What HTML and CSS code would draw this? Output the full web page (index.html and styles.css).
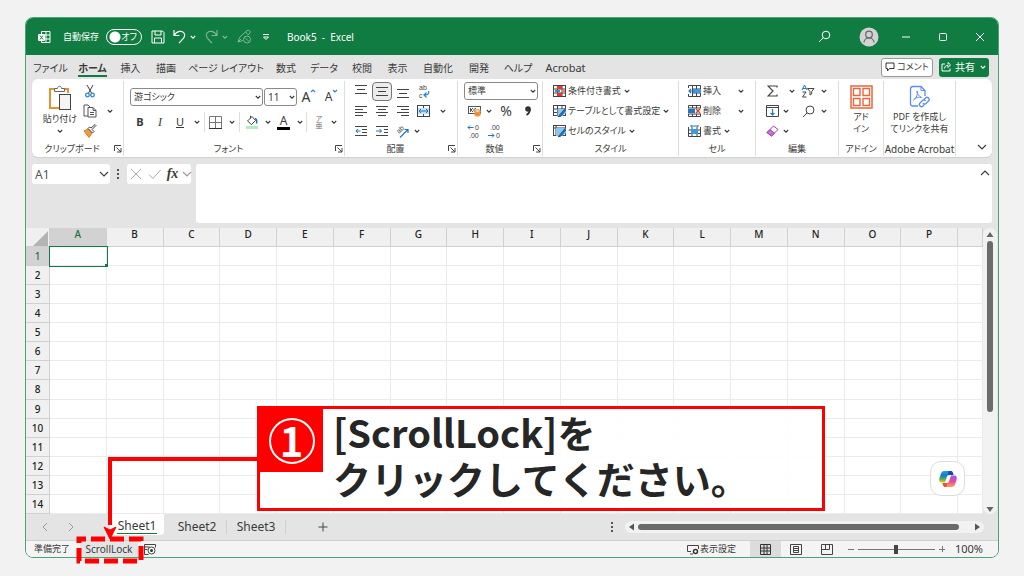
FILE: index.html
```html
<!DOCTYPE html>
<html lang="ja">
<head>
    <meta charset="utf-8">
    <title>Book5 - Excel</title>
    <link rel="stylesheet" href="styles.css">
</head>
<body>
<svg class="sprite" width="0" height="0">
    <symbol id="chev" viewBox="0 0 8 8"><path d="M1.800 3L4 5.200l2.200-2.200" fill="none" stroke="currentColor" stroke-width="1.100"/></symbol>
    <symbol id="chev-big" viewBox="0 0 12 12"><path d="M2 4l4 4 4-4" fill="none" stroke="currentColor" stroke-width="1.100"/></symbol>
    <symbol id="launch" viewBox="0 0 8 8"><path d="M.5 6V.5H7M2.500 2.500L7 7M7 3v4H3" fill="none" stroke="#444"/></symbol>
</svg>
<div class="window">
    <header class="titlebar">
        <svg class="app-logo" width="13" height="14" viewBox="0 0 13 14"><path d="M3.500 4V1.500h8.500v11H3.500v-2M8 1.500v11M3.500 5h8.500M7 9h5" fill="none" stroke="#fff"/><rect x="0" y="4" width="7" height="7" rx="1" fill="#fff"/><path d="M2 5.500l3 4M5 5.500l-3 4" stroke="#107c41"/></svg>
        <label class="autosave" for="autosave">自動保存</label>
        <span class="toggle"><input type="checkbox" id="autosave"><span>オフ</span></span>
        <div class="quick">
            <button aria-label="保存"><svg width="14" height="14" viewBox="0 0 14 14"><path d="M1 1h10.500L13 2.500V13H1zM4 1v4h6V1M3.500 13V8h7v5" fill="none" stroke="#fff"/></svg></button>
            <span class="split">
                <button aria-label="元に戻す"><svg width="15" height="15" viewBox="0 0 15 15"><path d="M2 1v5.500h5.500M2 6.500C5 1.500 10 1.500 12 4c2 3 0 5-5 10" fill="none" stroke="#fff" stroke-width="1.200"/></svg></button>
                <button aria-label="一覧"><svg width="8" height="8"><use href="#chev"/></svg></button>
            </span>
            <span class="split dim">
                <button aria-label="やり直し"><svg width="15" height="15" viewBox="0 0 15 15"><path d="M13 1v5.500H7.500M13 6.500C10 1.500 5 1.500 3 4c-2 3 0 5 5 10" fill="none" stroke="#fff" stroke-width="1.200"/></svg></button>
                <button aria-label="一覧"><svg width="8" height="8"><use href="#chev"/></svg></button>
            </span>
            <button class="dim" aria-label="ペン"><svg width="15" height="15" viewBox="0 0 15 15"><path d="M1 13l1.500-4.500L10 1.500c1.500-1 4 .5 3 2.500l-2 2M1 13l5-1.500M8.500 3l3 3M1 13l3-3" fill="none" stroke="#fff"/><circle cx="10" cy="10.500" r="3.500" fill="none" stroke="#fff"/><path d="M8 8.500l4 4" stroke="#fff"/></svg></button>
            <button aria-label="カスタマイズ"><svg width="8" height="8" viewBox="0 0 8 8"><path d="M1 1.500h6M1.500 4L4 6.500 6.500 4z" fill="none" stroke="#fff"/></svg></button>
        </div>
        <span class="doc-title">Book5&nbsp; -&nbsp; Excel</span>
        <div class="win-buttons">
            <button aria-label="検索"><svg width="13" height="13" viewBox="0 0 13 13"><circle cx="8" cy="5" r="3.800" fill="none" stroke="#fff"/><path d="M5.200 7.800L1 12" stroke="#fff"/></svg></button>
            <button aria-label="アカウント"><svg width="20" height="20" viewBox="0 0 20 20"><circle cx="10" cy="10" r="9.500" fill="#d3d3d3"/><circle cx="10" cy="7.500" r="3.300" fill="none" stroke="#666" stroke-width="1.200"/><path d="M5 15.500c0-6 10-6 10 0" fill="none" stroke="#666" stroke-width="1.200"/></svg></button>
            <button aria-label="最小化"><svg width="10" height="10"><path d="M1 5h8" stroke="#fff"/></svg></button>
            <button aria-label="最大化"><svg width="10" height="10"><rect x="1.500" y="1.500" width="7" height="7" rx="1" fill="none" stroke="#fff"/></svg></button>
            <button aria-label="閉じる"><svg width="10" height="10"><path d="M1 1l8 8M9 1L1 9" stroke="#fff"/></svg></button>
        </div>
    </header>

    <nav class="tabs">
        <div class="tab-list">
            <a href="#">ファイル</a>
            <a href="#" class="current">ホーム</a>
            <a href="#">挿入</a>
            <a href="#">描画</a>
            <a href="#">ページ レイアウト</a>
            <a href="#">数式</a>
            <a href="#">データ</a>
            <a href="#">校閲</a>
            <a href="#">表示</a>
            <a href="#">自動化</a>
            <a href="#">開発</a>
            <a href="#">ヘルプ</a>
            <a href="#" class="latin">Acrobat</a>
        </div>
        <button class="comment"><svg width="10" height="10" viewBox="0 0 10 10"><path d="M1 1h8v5.500H4.500L2.500 9V6.500H1z" fill="none" stroke="#333"/></svg>コメント</button>
        <button class="share"><svg width="10" height="10" viewBox="0 0 10 10"><path d="M4 2H1v7h8V6.500M3.500 6.500C4 4 5 3.500 7 3.500V5.500l2.500-2.700L7 .5v2" fill="none" stroke="#fff"/></svg>共有<svg width="8" height="8"><use href="#chev"/></svg></button>
    </nav>

    <section class="ribbon">
        <div class="group">
            <div class="clipboard">
                <button class="big"><svg width="24" height="26" viewBox="0 0 24 26"><path d="M7 4H2v19h10M16 4h4v4" fill="none" stroke="#e8912d" stroke-width="2"/><path d="M6.500 6.500V3.500h3c0-3 4-3 4 0h3v3z" fill="#fff" stroke="#666"/><rect x="11.500" y="9.500" width="11" height="15" fill="#f4f4f4" stroke="#444"/></svg><span>貼り付け</span><svg width="8" height="8"><use href="#chev"/></svg></button>
                <div class="stack">
                    <button aria-label="切り取り"><svg width="10" height="14" viewBox="0 0 10 14"><path d="M2 1l4.500 8M8 1L3.500 9" stroke="#444"/><circle cx="2.500" cy="11" r="1.800" fill="none" stroke="#2b88c8" stroke-width="1.300"/><circle cx="7.500" cy="11" r="1.800" fill="none" stroke="#2b88c8" stroke-width="1.300"/></svg></button>
                    <button aria-label="コピー"><svg width="14" height="14" viewBox="0 0 14 14"><path d="M5 12H1V1h4l2 2M5 3.500h5l3 3V13H5zM10 3.500v3h3M7 8.500h4M7 10.500h4" fill="none" stroke="#555"/></svg></button>
                    <button aria-label="書式のコピー"><svg width="14" height="14" viewBox="0 0 14 14"><path d="M1 7l4-2 4 4-3 4.500z" fill="#f39a3c" stroke="#e0761a"/><path d="M5 4.500L9.500 9l1.500-1.500L9 5.500l4-4-1-1-4 3.500L6.500 3z" fill="#fff" stroke="#444"/></svg></button>
                </div>
                <button aria-label="コピーの一覧"><svg width="8" height="8"><use href="#chev"/></svg></button>
            </div>
            <div class="caption"><span>クリップボード</span><button aria-label="詳細"><svg width="8" height="8"><use href="#launch"/></svg></button></div>
        </div>

        <div class="group">
            <div class="font-tools">
                <div class="font-row">
                    <span class="pick font-name"><select aria-label="フォント"><option>游ゴシック</option></select><svg width="8" height="8"><use href="#chev"/></svg></span>
                    <span class="pick font-size"><select aria-label="サイズ"><option>11</option></select><svg width="8" height="8"><use href="#chev"/></svg></span>
                    <button class="grow">A<svg width="6" height="6" viewBox="0 0 6 6"><path d="M1 4l2-2 2 2" fill="none" stroke="#2b88c8" stroke-width="1.200"/></svg></button>
                    <button class="shrink">A<svg width="6" height="6" viewBox="0 0 6 6"><path d="M1 2l2 2 2-2" fill="none" stroke="#2b88c8" stroke-width="1.200"/></svg></button>
                </div>
                <div class="format-row">
                    <button><b>B</b></button>
                    <button><i>I</i></button>
                    <button><u>U</u></button>
                    <button aria-label="下線の一覧"><svg width="8" height="8"><use href="#chev"/></svg></button>
                    <span class="rule"></span>
                    <button aria-label="罫線"><svg width="13" height="13" viewBox="0 0 13 13"><path d="M.5.5h12v12M.5.5v12M6.500.5v12M.5 6.500h12" fill="none" stroke="#777"/><path d="M0 12.500h13" stroke="#333"/></svg></button>
                    <button aria-label="罫線の一覧"><svg width="8" height="8"><use href="#chev"/></svg></button>
                    <span class="rule"></span>
                    <button aria-label="塗りつぶし"><svg width="14" height="14" viewBox="0 0 14 14"><path d="M2.500 6L7 1.500 10.500 5.500 6.500 9.500z" fill="#fff" stroke="#444"/><path d="M5.500 3.500V.8" stroke="#444"/><path d="M10 3.500c2 .5 2 2.500 1.500 5" fill="none" stroke="#1f6fb2" stroke-width="1.500"/><rect x="1" y="11" width="12" height="3" fill="#b5ecc1"/></svg></button>
                    <button aria-label="塗りつぶしの一覧"><svg width="8" height="8"><use href="#chev"/></svg></button>
                    <button class="font-color">A</button>
                    <button aria-label="文字色の一覧"><svg width="8" height="8"><use href="#chev"/></svg></button>
                    <span class="rule"></span>
                    <button class="ruby"><span>ア</span><span>亜</span></button>
                    <button aria-label="ふりがなの一覧"><svg width="8" height="8"><use href="#chev"/></svg></button>
                </div>
            </div>
            <div class="caption"><span>フォント</span><button aria-label="詳細"><svg width="8" height="8"><use href="#launch"/></svg></button></div>
        </div>

        <div class="group">
            <div class="align-tools">
                <button aria-label="上揃え"><svg width="12" height="14"><path d="M0 1.500h12M2 5.500h8M0 9.500h12" stroke="#444"/></svg></button>
                <button class="pressed" aria-label="上下中央揃え"><svg width="12" height="12"><path d="M0 2.500h12M2 6.500h8M0 10.500h12" stroke="#444"/></svg></button>
                <button aria-label="下揃え"><svg width="12" height="14"><path d="M0 5.500h12M2 9.500h8M0 13.500h12" stroke="#444"/></svg></button>
                <button aria-label="折り返して全体を表示"><svg class="glyphs" width="13" height="16" viewBox="0 0 13 16"><text x="2" y="7">ab</text><text x="2" y="15">c</text><path d="M11.500 8c1 4-2 4-4.500 4M9.500 9.500L7 12l2.500 2.500" fill="none" stroke="#2b88c8" stroke-width="1.200"/></svg></button>
                <span></span>
                <button aria-label="左揃え"><svg width="12" height="12"><path d="M0 1.500h12M0 4.500h8M0 7.500h12M0 10.500h8" stroke="#444"/></svg></button>
                <button aria-label="中央揃え"><svg width="12" height="12"><path d="M0 1.500h12M2 4.500h8M0 7.500h12M2 10.500h8" stroke="#444"/></svg></button>
                <button aria-label="右揃え"><svg width="12" height="12"><path d="M0 1.500h12M4 4.500h8M0 7.500h12M4 10.500h8" stroke="#444"/></svg></button>
                <button aria-label="セルを結合して中央揃え"><svg width="13" height="12" viewBox="0 0 13 12"><rect x=".5" y=".5" width="12" height="11" fill="#fff" stroke="#444"/><rect x="1" y="3" width="11" height="6" fill="#bfe0f7"/><path d="M6.500.5V3M6.500 9v2.500" stroke="#444"/><path d="M2 6h9M4 4L2 6l2 2M9 4l2 2-2 2" fill="none" stroke="#1f78c1"/></svg></button>
                <button aria-label="結合の一覧"><svg width="8" height="8"><use href="#chev"/></svg></button>
                <button aria-label="インデントを減らす"><svg width="12" height="12"><path d="M0 1.500h12M7 4.500h5M7 7.500h5M0 10.500h12" stroke="#444"/><path d="M5.500 6H.8M3 4L1 6l2 2" fill="none" stroke="#1f78c1"/></svg></button>
                <button aria-label="インデントを増やす"><svg width="12" height="12"><path d="M0 1.500h12M8 4.500h4M8 7.500h4M0 10.500h12" stroke="#444"/><path d="M0 6h5.500M3.500 4l2 2-2 2" fill="none" stroke="#1f78c1"/></svg></button>
                <button class="orient" aria-label="方向"><svg class="glyphs" width="15" height="15" viewBox="0 0 15 15"><text transform="translate(4 10) rotate(-45)">ab</text><path d="M5 13.500l8-8M9.500 5.500H13V9" fill="none" stroke="#1f78c1" stroke-width="1.200"/></svg></button>
                <button class="orient-more" aria-label="方向の一覧"><svg width="8" height="8"><use href="#chev"/></svg></button>
            </div>
            <div class="caption"><span>配置</span><button aria-label="詳細"><svg width="8" height="8"><use href="#launch"/></svg></button></div>
        </div>

        <div class="group">
            <div class="number-tools">
                <span class="pick"><select aria-label="表示形式"><option>標準</option></select><svg width="8" height="8"><use href="#chev"/></svg></span>
                <div class="number-row">
                    <button aria-label="通貨"><svg width="13" height="12" viewBox="0 0 13 12"><rect x=".5" y="1.500" width="12" height="7" fill="#fff" stroke="#555"/><path d="M2.500 3v4M5 3L3 5l2 2M8 3.500c-3 0-3 3 0 3" fill="none" stroke="#555"/><path d="M6.500 6v4.500c0 1.500 6 1.500 6 0V6z" fill="#f4a04c"/><ellipse cx="9.500" cy="6" rx="3" ry="1.200" fill="#fff" stroke="#e0761a"/><path d="M6.500 8.500c1 1.200 5 1.200 6 0" fill="none" stroke="#e0761a"/></svg></button>
                    <button aria-label="通貨の一覧"><svg width="8" height="8"><use href="#chev"/></svg></button>
                    <button class="percent">%</button>
                    <button aria-label="桁区切り"><svg width="8" height="12" viewBox="0 0 8 12"><circle cx="4" cy="4" r="2.800" fill="#333"/><path d="M5.900 4c.3 3-1 4.500-3.400 6" fill="none" stroke="#333" stroke-width="1.700"/></svg></button>
                </div>
                <div class="decimal-row">
                    <button aria-label="小数点以下の表示桁数を増やす"><svg class="glyphs" width="13" height="16" viewBox="0 0 13 16"><path d="M6.500 4.500H1M3 2.500l-2 2 2 2" fill="none" stroke="#1f78c1"/><text x="8" y="7">0</text><text x="2" y="15">.00</text></svg></button>
                    <button aria-label="小数点以下の表示桁数を減らす"><svg class="glyphs" width="13" height="16" viewBox="0 0 13 16"><text x="2" y="7">.00</text><path d="M0 12.500h6M4 10.500l2 2-2 2" fill="none" stroke="#1f78c1"/><text x="8" y="15">0</text></svg></button>
                </div>
            </div>
            <div class="caption"><span>数値</span><button aria-label="詳細"><svg width="8" height="8"><use href="#launch"/></svg></button></div>
        </div>

        <div class="group">
            <div class="rows style-rows">
                <button><svg width="13" height="12" viewBox="0 0 13 12"><rect x=".5" y=".5" width="12" height="11" fill="#fff" stroke="#444"/><path d="M4.500 0v12M9 0v12M0 4h13M0 8h13" stroke="#444"/><path d="M4 1h5v3H4zM4 8h5v3H4z" fill="#e33"/><path d="M9 4.500h3v3H9z" fill="#f08080"/><path d="M2 5h5v2H2z" fill="#3a8fd0"/></svg>条件付き書式<svg width="8" height="8"><use href="#chev"/></svg></button>
                <button><svg width="13" height="12" viewBox="0 0 13 12"><rect x=".5" y=".5" width="12" height="10" fill="#fff" stroke="#444"/><path d="M4.500 0v11M9 0v11M0 4h13M0 7.500h13" stroke="#444"/><path d="M4.500 4H13v4l-4 3.500H4.500z" fill="#8cc5ee"/><path d="M12.500 3L7 9.500 5 12l3-1 5-6" fill="#1f78c1" stroke="#1f5f99"/></svg>テーブルとして書式設定<svg width="8" height="8"><use href="#chev"/></svg></button>
                <button><svg width="13" height="12" viewBox="0 0 13 12"><rect x=".5" y=".5" width="12" height="10" fill="#fff" stroke="#444"/><path d="M3 0v11M0 3h13" stroke="#444"/><path d="M3 3h10v5l-4 3H3z" fill="#8cc5ee"/><path d="M12.500 3L7 9.500 5 12l3-1 5-6" fill="#1f78c1" stroke="#1f5f99"/></svg>セルのスタイル<svg width="8" height="8"><use href="#chev"/></svg></button>
            </div>
            <div class="caption"><span>スタイル</span></div>
        </div>

        <div class="group">
            <div class="rows cell-rows">
                <button class="spread"><svg width="13" height="12" viewBox="0 0 13 12"><path d="M.5 3V.5h12v11H.5V9M4.500.5v11M8.500.5v11M4 4h9M4 8h9" fill="none" stroke="#444"/><path d="M5 4h8v4H5z" fill="#3a9be0"/><path d="M6 6H1M3 4L1 6l2 2" fill="none" stroke="#1f78c1" stroke-width="1.200"/></svg>挿入<svg width="8" height="8"><use href="#chev"/></svg></button>
                <button class="spread"><svg width="13" height="12" viewBox="0 0 13 12"><path d="M.5 3V.5h12V3M.5 9v2.500h12V9M4.500.5V3M8.500.5V3M4.500 9v2.500M8.500 9v2.500M0 3h13M0 9h13" fill="none" stroke="#444"/><path d="M0 4h7v4H0z" fill="#1f78c1"/><path d="M8 4l4 4M12 4L8 8" stroke="#e33" stroke-width="1.300"/></svg>削除<svg width="8" height="8"><use href="#chev"/></svg></button>
                <button><svg width="13" height="12" viewBox="0 0 13 12"><path d="M.5 2v9.500h12V2M.5 5h12M.5 8.500h12M4 2v9.500M9 2v9.500" fill="none" stroke="#444"/><path d="M3 4h7v5H3z" fill="#3a9be0"/><path d="M3 1h7M3 0v2M10 0v2" stroke="#1f78c1"/></svg>書式<svg width="8" height="8"><use href="#chev"/></svg></button>
            </div>
            <div class="caption"><span>セル</span></div>
        </div>

        <div class="group">
            <div class="edit-tools">
                <div>
                    <button class="sum" aria-label="合計"><svg width="11" height="12" viewBox="0 0 11 12"><path d="M10 2.500V1H1l5 5-5 5h9V9.500" fill="none" stroke="#444" stroke-width="1.200"/></svg></button>
                    <button class="sum-more" aria-label="合計の一覧"><svg width="8" height="8"><use href="#chev"/></svg></button>
                    <button aria-label="並べ替えとフィルター"><svg width="14" height="14" viewBox="0 0 14 14"><path d="M1 6l2.500-5L6 6M2 4.500h3" fill="none" stroke="#1f78c1"/><path d="M1.500 8H5L1.500 13H5.500M6.500 4.500H13L10.700 7.500V10L9 11V7.500z" fill="none" stroke="#444"/></svg></button>
                    <button aria-label="並べ替えの一覧"><svg width="8" height="8"><use href="#chev"/></svg></button>
                </div>
                <div>
                    <button aria-label="フィル"><svg width="13" height="12" viewBox="0 0 13 12"><path d="M.5.5h12v11H.5zM.5 2.500h12" fill="none" stroke="#444"/><path d="M6.500 4v6M4.500 8l2 2 2-2" fill="none" stroke="#1f78c1" stroke-width="1.200"/></svg></button>
                    <button aria-label="フィルの一覧"><svg width="8" height="8"><use href="#chev"/></svg></button>
                    <button class="find" aria-label="検索と選択"><svg width="13" height="13" viewBox="0 0 13 13"><circle cx="8" cy="5" r="4" fill="none" stroke="#444"/><path d="M5 8L1 12" stroke="#444"/></svg></button>
                    <button aria-label="検索の一覧"><svg width="8" height="8"><use href="#chev"/></svg></button>
                </div>
                <div>
                    <button aria-label="クリア"><svg width="13" height="12" viewBox="0 0 13 12"><path d="M1 7.500L7.500 1 12 4.500 5.500 11z" fill="#fff" stroke="#a33bb5"/><path d="M1 7.500L4 4.500l4.500 3.800L5.500 11z" fill="#c774d4" stroke="#a33bb5"/></svg></button>
                    <button aria-label="クリアの一覧"><svg width="8" height="8"><use href="#chev"/></svg></button>
                </div>
            </div>
            <div class="caption"><span>編集</span></div>
        </div>

        <div class="group">
            <button class="tile"><svg width="23" height="24" viewBox="0 0 23 24"><path d="M1 1h21v22H1z" fill="#fff" stroke="#e8663c" stroke-width="1.500"/><path d="M3.500 3.500h6.500v7H3.500zM13 3.500h6.500v7H13zM3.500 13.500h6.500v7H3.500zM13 13.500h6.500v7H13z" fill="none" stroke="#e8663c" stroke-width="1.400"/></svg><span>アド<br>イン</span></button>
            <div class="caption"><span>アドイン</span></div>
        </div>

        <div class="group">
            <button class="tile"><svg width="22" height="24" viewBox="0 0 22 24"><path d="M9 21H4c-2 0-2.500-1-2.500-2.500V4C1.500 2.500 2 1.500 4 1.500h8L16 5.500V11" fill="none" stroke="#5b8def" stroke-width="1.300"/><path d="M12 1.500v4h4M8 6c1 3-.5 7-3.500 9 2-2.500 5.500-3.500 8-2.500-2-1-4.500-3.500-4.500-6.500z" fill="none" stroke="#5b8def"/><path d="M14.500 15l2-2c2-2 5 1 3 3l-2.500 2.500c-1 1-2.500.5-3-.5M16 18.500l-2 2.500c-2 2-5-1-3-3l2.500-2.500c1-1 2.500-.5 3 .5" fill="none" stroke="#5b8def" stroke-width="1.300"/></svg><span>PDF を作成し<br>てリンクを共有</span></button>
            <div class="caption latin"><span>Adobe Acrobat</span></div>
        </div>

        <button class="collapse" aria-label="リボンを折りたたむ"><svg width="12" height="12"><use href="#chev-big"/></svg></button>
    </section>

    <section class="formula">
        <span class="name-box"><input type="text" value="A1" aria-label="名前ボックス"><svg width="12" height="12"><use href="#chev-big"/></svg></span>
        <span class="dots"></span>
        <div class="formula-buttons">
            <button aria-label="キャンセル"><svg width="12" height="12"><path d="M1 1l10 10M11 1L1 11" stroke="#aaa"/></svg></button>
            <button aria-label="入力"><svg width="13" height="12"><path d="M1 6.500l4 4L12.500 2" fill="none" stroke="#aaa"/></svg></button>
            <button class="fx">fx</button>
            <button class="faint" aria-label="関数の一覧"><svg width="12" height="12"><use href="#chev-big"/></svg></button>
        </div>
        <div class="formula-input">
            <textarea aria-label="数式バー"></textarea>
            <button aria-label="数式バーの折りたたみ"><svg class="flip" width="12" height="12"><use href="#chev-big"/></svg></button>
        </div>
    </section>

    <main class="sheet">
        <div class="cells">
            <table>
                <thead>
                    <tr><th class="corner"><svg width="15" height="15"><path d="M15 0v15H0z" fill="#b4b4b4"/></svg></th><th class="active">A</th><th>B</th><th>C</th><th>D</th><th>E</th><th>F</th><th>G</th><th>H</th><th>I</th><th>J</th><th>K</th><th>L</th><th>M</th><th>N</th><th>O</th><th>P</th><th class="last"></th></tr>
                </thead>
                <tbody>
                    <tr><th class="active">1</th><td class="selected"></td><td></td><td></td><td></td><td></td><td></td><td></td><td></td><td></td><td></td><td></td><td></td><td></td><td></td><td></td><td></td><td></td></tr>
                    <tr><th>2</th><td></td><td></td><td></td><td></td><td></td><td></td><td></td><td></td><td></td><td></td><td></td><td></td><td></td><td></td><td></td><td></td><td></td></tr>
                    <tr><th>3</th><td></td><td></td><td></td><td></td><td></td><td></td><td></td><td></td><td></td><td></td><td></td><td></td><td></td><td></td><td></td><td></td><td></td></tr>
                    <tr><th>4</th><td></td><td></td><td></td><td></td><td></td><td></td><td></td><td></td><td></td><td></td><td></td><td></td><td></td><td></td><td></td><td></td><td></td></tr>
                    <tr><th>5</th><td></td><td></td><td></td><td></td><td></td><td></td><td></td><td></td><td></td><td></td><td></td><td></td><td></td><td></td><td></td><td></td><td></td></tr>
                    <tr><th>6</th><td></td><td></td><td></td><td></td><td></td><td></td><td></td><td></td><td></td><td></td><td></td><td></td><td></td><td></td><td></td><td></td><td></td></tr>
                    <tr><th>7</th><td></td><td></td><td></td><td></td><td></td><td></td><td></td><td></td><td></td><td></td><td></td><td></td><td></td><td></td><td></td><td></td><td></td></tr>
                    <tr><th>8</th><td></td><td></td><td></td><td></td><td></td><td></td><td></td><td></td><td></td><td></td><td></td><td></td><td></td><td></td><td></td><td></td><td></td></tr>
                    <tr><th>9</th><td></td><td></td><td></td><td></td><td></td><td></td><td></td><td></td><td></td><td></td><td></td><td></td><td></td><td></td><td></td><td></td><td></td></tr>
                    <tr><th>10</th><td></td><td></td><td></td><td></td><td></td><td></td><td></td><td></td><td></td><td></td><td></td><td></td><td></td><td></td><td></td><td></td><td></td></tr>
                    <tr><th>11</th><td></td><td></td><td></td><td></td><td></td><td></td><td></td><td></td><td></td><td></td><td></td><td></td><td></td><td></td><td></td><td></td><td></td></tr>
                    <tr><th>12</th><td></td><td></td><td></td><td></td><td></td><td></td><td></td><td></td><td></td><td></td><td></td><td></td><td></td><td></td><td></td><td></td><td></td></tr>
                    <tr><th>13</th><td></td><td></td><td></td><td></td><td></td><td></td><td></td><td></td><td></td><td></td><td></td><td></td><td></td><td></td><td></td><td></td><td></td></tr>
                    <tr><th>14</th><td></td><td></td><td></td><td></td><td></td><td></td><td></td><td></td><td></td><td></td><td></td><td></td><td></td><td></td><td></td><td></td><td></td></tr>
                </tbody>
            </table>
            <button class="copilot" aria-label="Copilot"><svg width="18" height="18" viewBox="0 0 18 18">
                <defs>
                    <linearGradient id="cool" x1="0" y1="0" x2="0" y2="1"><stop offset="0" stop-color="#1aa0ee"/><stop offset=".4" stop-color="#1878d0"/><stop offset=".7" stop-color="#4fb05a"/><stop offset="1" stop-color="#f2c811"/></linearGradient>
                    <linearGradient id="warm" x1="0" y1="0" x2="0" y2="1"><stop offset="0" stop-color="#9a5cf0"/><stop offset=".5" stop-color="#e8479a"/><stop offset="1" stop-color="#ffa05a"/></linearGradient>
                </defs>
                <path d="M5 1h7c1.500 0 2 2 2.500 4H10c-1.500 0-2 1-2.500 3L6 12.500H2.500C0 12.500 0 10 .5 8L2 3.500C2.600 2 3.500 1 5 1z" fill="url(#cool)"/>
                <path d="M9.500 1H12c1.500 0 2 2 2.500 4H9z" fill="#1748b5"/>
                <path d="M13 17H6c-1.500 0-2-2-2.500-4H8c1.500 0 2-1 2.500-3L12 5.500h3.500c2.500 0 2.500 2.500 2 4.500L16 14.500c-.6 1.500-1.500 2.500-3 2.500z" fill="url(#warm)"/>
                <path d="M3.500 13H8l-.5 4H6c-1.500 0-2-2-2.500-4z" fill="#e8513a"/>
            </svg></button>
        </div>
        <div class="vscroll"><svg width="8" height="7"><path d="M4 1l3.500 5h-7z" fill="#666"/></svg><span class="thumb"></span><svg width="8" height="7"><path d="M4 6l3.500-5h-7z" fill="#666"/></svg></div>
    </main>

    <section class="sheet-tabs">
        <button class="arrow" aria-label="前へ"><svg width="8" height="8"><path d="M6 0L2 4l4 4" fill="none" stroke="#999"/></svg></button>
        <button class="arrow" aria-label="次へ"><svg width="8" height="8"><path d="M2 0l4 4-4 4" fill="none" stroke="#999"/></svg></button>
        <button class="sheet-tab current"><span>Sheet1</span></button>
        <button class="sheet-tab">Sheet2</button>
        <button class="sheet-tab">Sheet3</button>
        <button class="add" aria-label="新しいシート"><svg width="10" height="10"><path d="M5 .5v9M.5 5h9" stroke="#444"/></svg></button>
        <span class="dots"></span>
        <div class="hscroll"><svg width="7" height="8"><path d="M1 4l5-3.500v7z" fill="#555"/></svg><span class="thumb"></span><svg width="7" height="8"><path d="M6 4L1 .5v7z" fill="#555"/></svg></div>
    </section>

    <footer class="status">
        <span class="ready">準備完了</span>
        <span class="scroll-lock">ScrollLock</span>
        <button aria-label="マクロの記録"><svg width="12" height="11" viewBox="0 0 12 11"><path d="M.5.500h11v3M.5.500v10h4M.5 3h5M.5 5.500h3" fill="none" stroke="#444"/><circle cx="7.500" cy="6.500" r="3.500" fill="#fff" stroke="#444"/><circle cx="7.500" cy="6.500" r="1.500" fill="#333"/></svg></button>
        <button class="display-set"><svg width="12" height="11" viewBox="0 0 12 11"><path d="M4 7.500H.5v-6h11V5M3 10h3" fill="none" stroke="#444"/><circle cx="8.500" cy="7.500" r="2" fill="#fff" stroke="#333" stroke-width="1.500"/></svg>表示設定</button>
        <div class="views">
            <button class="on" aria-label="標準"><svg width="11" height="11"><path d="M.5.5h10v10H.5zM4 0v11M7 0v11M0 4h11M0 7h11" fill="none" stroke="#333"/></svg></button>
            <button aria-label="ページ レイアウト"><svg width="12" height="11"><path d="M.5.5h11v10H.5zM3.500 2.500h5v6h-5zM4 4.500h4M4 6.500h4" fill="none" stroke="#444"/></svg></button>
            <button aria-label="改ページ プレビュー"><svg width="12" height="11"><path d="M.5.5h11v10H.5zM4.500.5v5M8.500.5v5M1 5.500h7.500" fill="none" stroke="#444"/></svg></button>
        </div>
        <div class="zoom">
            <button aria-label="縮小"><svg width="8" height="8"><path d="M1 4.500h6" stroke="#777"/></svg></button>
            <input type="range" min="0" max="100" value="50" aria-label="ズーム">
            <button aria-label="拡大"><svg width="8" height="8"><path d="M1 4.500h6M4.500 1v6" stroke="#777"/></svg></button>
            <span class="percent-value">100%</span>
        </div>
    </footer>

    <svg class="pointer" width="186" height="114" viewBox="0 0 186 114">
        <path d="M186 9H38v66" fill="none" stroke="red" stroke-width="4"/>
        <path d="M32 77l6 3 6-3-6 12z" fill="red" stroke="red"/>
        <rect x="7" y="89" width="62" height="22" fill="none" stroke="red" stroke-width="5" stroke-dasharray="14 5" stroke-dashoffset="7"/>
    </svg>
    <div class="callout">
        <div class="step"><span>1</span></div>
        <p>[ScrollLock]を<br>クリックしてください。</p>
    </div>
</div>
</body>
</html>
```

FILE: styles.css
```css
* {
    box-sizing: border-box;
}
body {
    margin: 0;
    height: 100vh;
    padding: 17px 25px 18px;
    background: #f2f2f2;
    color: #3a3a3a;
    font-family: "Noto Sans", "Noto Sans CJK JP", sans-serif;
    font-size: 10px;
    line-height: 12px;
    font-feature-settings: "palt";
}
button, input, select, textarea {
    margin: 0;
    padding: 0;
    border: 0;
    background: none;
    color: inherit;
    font: inherit;
    font-feature-settings: inherit;
}
button {
    display: flex;
    align-items: center;
    justify-content: center;
    white-space: nowrap;
}
svg {
    display: block;
    flex: none;
}
a {
    color: inherit;
    text-decoration: none;
}
.sprite {
    position: absolute;
}
.glyphs {
    fill: #444;
    font-family: "Liberation Sans", sans-serif;
    font-size: 7px;
}
.window {
    position: relative;
    display: flex;
    flex-direction: column;
    height: 100%;
    border: 1px solid #4ba377;
    border-radius: 8px;
    background: #e4e4e4;
}

/* title bar */
.titlebar {
    display: flex;
    align-items: center;
    height: 37px;
    padding: 0 0 0 12px;
    border-radius: 7px 7px 0 0;
    background: #107c41;
    color: #fff;
}
.autosave {
    margin: 0 5px 0 12px;
    width: 38px;
    white-space: nowrap;
    font-size: 9px;
}
.toggle {
    display: grid;
    align-items: center;
    width: 36px;
    font-size: 9px;
}
.toggle input, .toggle span {
    grid-area: 1 / 1;
}
.toggle input {
    appearance: none;
    height: 16px;
    border: 1px solid #fff;
    border-radius: 8px;
    background: radial-gradient(circle at 8px 7px, #fff 5px, transparent 6px);
}
.toggle span {
    justify-self: end;
    margin-right: 5px;
    pointer-events: none;
}
.quick {
    display: flex;
    gap: 6px;
    margin-left: 8px;
}
.quick > button {
    width: 16px;
}
.split {
    display: flex;
    align-items: center;
}
.quick .split {
    gap: 2px;
    width: 26px;
}
.dim {
    opacity: 0.45;
}
.doc-title {
    flex: 1;
    margin-left: 13px;
    white-space: nowrap;
}
.win-buttons {
    display: grid;
    grid-template-columns: 51px 37px 37px 37px 37px;
}

/* ribbon tabs */
.tabs {
    display: flex;
    align-items: center;
    height: 24px;
    padding: 0 9px 0 3px;
}
.tab-list {
    flex: 1;
    display: grid;
    grid-template-columns: 43px 41px 35px 36px 84px 36px 40px 36px 35px 46px 36px 42px 53px;
    height: 22px;
}
.tab-list a {
    align-self: start;
    justify-self: center;
    padding: 6px 0 1px;
    white-space: nowrap;
}
.tab-list .latin {
    font-size: 11px;
}
.tab-list .current {
    font-weight: bold;
    border-bottom: 2px solid #107c41;
}
.comment, .share {
    height: 19px;
    gap: 2px;
    border-radius: 3px;
}
.comment {
    width: 52px;
    border: 1px solid #999;
    background: #fff;
    font-size: 9px;
}
.share {
    gap: 4px;
    width: 50px;
    margin-left: 6px;
    background: #107c41;
    color: #fff;
}

/* ribbon */
.ribbon {
    display: grid;
    grid-template-columns: 92px 221px 113px 85px 136px 77px 83px 45px 72px 1fr;
    height: 78px;
    margin: 0 6px;
    border-radius: 6px;
    background: #fff;
    box-shadow: 0 1px 1px #d0d0d0;
}
.group {
    display: flex;
    flex-direction: column;
    justify-content: space-between;
    min-width: 0;
    margin: 2px 0 1px;
    border-right: 1px solid #dedede;
}
.caption {
    display: flex;
    align-items: center;
    height: 15px;
    white-space: nowrap;
    font-size: 9px;
}
.caption.latin {
    font-size: 10px;
}
.caption span {
    flex: 1;
    display: flex;
    justify-content: center;
}
.caption button {
    width: 11px;
}
.clipboard {
    display: grid;
    grid-template-columns: 34px 26px 13px;
    padding-left: 11px;
    height: 60px;
}
.clipboard .big {
    flex-direction: column;
    justify-content: flex-start;
    gap: 2px;
    padding-top: 4px;
    font-size: 9px;
}
.stack {
    display: grid;
    grid-template-rows: 20px 20px 20px;
}
.font-tools {
    padding: 7px 0 0 6px;
}
.font-row {
    display: grid;
    grid-template-columns: 133px 33px 22px 21px;
    gap: 1px;
}
.pick {
    display: grid;
    align-items: center;
}
.pick select, .pick svg {
    grid-area: 1 / 1;
}
.pick select {
    appearance: none;
    height: 18px;
    padding-left: 3px;
    border: 1px solid #8a8a8a;
    border-radius: 3px;
    font-size: 9px;
}
.font-size select {
    font-size: 10px;
}
.pick svg {
    justify-self: end;
    margin-right: 1px;
    pointer-events: none;
}
.font-row button {
    align-items: flex-start;
    line-height: 17px;
}
.grow {
    font-size: 14px;
}
.shrink {
    font-size: 12px;
}
.format-row {
    display: grid;
    grid-template-columns: 20px 20px 20px 14px 3px 17px 15px 3px 19px 13px 19px 13px 5px 16px 14px;
    align-items: center;
    height: 32px;
    font-size: 11px;
}
.format-row i {
    font-family: "Liberation Serif", serif;
    font-size: 12px;
}
.rule {
    width: 1px;
    height: 20px;
    background: #dedede;
}
.font-color {
    justify-self: center;
    width: 13px;
    border-bottom: 3px solid #000;
    font-size: 12px;
}
.ruby {
    flex-direction: column;
    font-size: 7px;
    line-height: 7px;
    color: #777;
}
.align-tools {
    display: grid;
    grid-template-columns: 21px 21px 21px 21px 18px;
    grid-template-rows: 20px 20px 20px;
    justify-items: center;
    align-items: center;
    padding-left: 5px;
}
.orient-more {
    justify-self: start;
}
.pressed {
    width: 20px;
    height: 19px;
    border: 1px solid #777;
    border-radius: 4px;
    background: #ececec;
}
.number-tools {
    display: grid;
    grid-template-rows: 20px 20px 20px;
    padding: 0 5px 0 6px;
}
.number-row {
    display: grid;
    grid-template-columns: 20px 10px 24px 20px;
}
.percent {
    font-size: 14px;
}
.decimal-row {
    display: flex;
    gap: 8px;
    padding-left: 3px;
}
.rows {
    display: grid;
    grid-template-rows: 20px 20px 20px;
    padding-left: 10px;
}
.cell-rows {
    padding: 0 10px 0 9px;
}
.rows button {
    justify-content: flex-start;
    gap: 2px;
    font-size: 9px;
}
.rows .spread svg:last-child {
    margin-left: auto;
}
.edit-tools > div {
    display: grid;
    grid-template-columns: 20px 8px 6px 24px 8px;
    height: 20px;
    padding-left: 6px;
}
.edit-tools .sum-more {
    grid-column: 2 / 4;
    justify-content: flex-end;
}
.edit-tools .find {
    grid-column: 4;
}
.tile {
    flex-direction: column;
    gap: 2px;
    padding-top: 4px;
    font-size: 9px;
}
.collapse {
    align-self: end;
    justify-self: end;
    margin: 0 4px 4px 0;
}

/* formula bar */
.formula {
    display: flex;
    align-items: flex-start;
    margin: 7px 6px 5px;
    height: 59px;
}
.name-box {
    display: grid;
    width: 78px;
    align-items: center;
    border-radius: 3px;
    background: #fff;
}
.name-box input, .name-box svg {
    grid-area: 1 / 1;
}
.name-box input {
    width: 100%;
    height: 20px;
    padding-left: 3px;
    font-size: 12px;
    color: #555;
}
.name-box svg {
    justify-self: end;
}
.dots {
    width: 2px;
    height: 10px;
    background: repeating-linear-gradient(#555 0 2px, transparent 2px 4px);
}
.formula .dots {
    margin: 5px 8px 0 7px;
}
.formula-buttons {
    display: grid;
    grid-template-columns: 18px 18px 19px 9px;
    width: 64px;
    height: 20px;
    border-radius: 3px;
    background: #fff;
}
.fx {
    font-family: "Liberation Serif", serif;
    font-size: 14px;
    font-style: italic;
    font-weight: bold;
}
.faint {
    color: #999;
}
.formula-input {
    flex: 1;
    display: flex;
    align-items: flex-start;
    height: 100%;
    margin-left: 5px;
    border-radius: 3px;
    background: #fff;
}
.formula-input textarea {
    flex: 1;
    height: 100%;
    resize: none;
}
.formula-input button {
    padding: 3px 1px;
}
.flip {
    transform: rotate(180deg);
}

/* cells */
.sheet {
    flex: 1;
    display: flex;
    min-height: 0;
}
.cells {
    flex: 1;
    position: relative;
    background: #fff;
}
table {
    width: 100%;
    height: 100%;
    table-layout: fixed;
    border-collapse: separate;
    border-spacing: 0;
}
th, td {
    padding: 0;
    border-right: 1px solid #ebebeb;
    border-bottom: 1px solid #ebebeb;
}
th {
    background: #f0f0f0;
    border-color: #d0d0d0;
    font-weight: 500;
    color: #222;
}
thead th {
    height: 19px;
    padding-bottom: 6px;
}
thead .corner {
    width: 24px;
    padding: 3px 0 0 7px;
}
.last {
    width: 25px;
}
th.active {
    background: #d2d2d2;
    color: #1e7145;
}
.selected {
    position: relative;
    outline: 1px solid #107c41;
}
.selected::after {
    content: "";
    position: absolute;
    right: -2px;
    bottom: -2px;
    width: 3px;
    height: 3px;
    background: #107c41;
}
.copilot {
    position: absolute;
    right: 18px;
    bottom: 18px;
    width: 35px;
    height: 35px;
    border: 1px solid #ddd;
    border-radius: 11px;
    background: #fff;
}
.vscroll {
    display: flex;
    flex-direction: column;
    align-items: center;
    width: 14px;
    margin-right: 1px;
    padding: 3px 0 1px;
    border-radius: 7px;
    background: #f2f2f2;
}
.vscroll .thumb {
    width: 6px;
    height: 171px;
    margin: 3px 0 auto;
    border-radius: 3px;
    background: #6b6b6b;
}

/* sheet tabs */
.sheet-tabs {
    display: flex;
    align-items: center;
    height: 26px;
    padding: 0 14px 0 6px;
    font-size: 12px;
}
.arrow {
    width: 26px;
}
.sheet-tab {
    width: 59px;
    height: 14px;
    border-right: 1px solid #d0d0d0;
}
.sheet-tab.current {
    align-self: flex-start;
    width: 54px;
    height: 21px;
    margin: 0 4px 0 26px;
    border: 0;
    border-radius: 0 0 4px 4px;
    background: #fff;
}
.current span {
    padding: 3px 1px 0;
    border-bottom: 1px solid #107c41;
    line-height: 15px;
}
.add {
    width: 74px;
}
.sheet-tabs .dots {
    margin: 0 12px 0 auto;
}
.hscroll {
    flex: 0 1 359px;
    display: flex;
    align-items: center;
    height: 12px;
    padding: 0 3px;
    border-radius: 6px;
    background: #f2f2f2;
}
.hscroll .thumb {
    flex: 1;
    height: 6px;
    margin: 0 15px 0 3px;
    border-radius: 3px;
    background: #6b6b6b;
}

/* status bar */
.status {
    display: flex;
    align-items: center;
    height: 17px;
    padding: 0 15px 0 8px;
    border-top: 1px solid #d0d0d0;
    border-radius: 0 0 7px 7px;
    background: #f4f4f4;
    font-size: 9px;
}
.ready {
    width: 46px;
}
.scroll-lock {
    width: 58px;
    margin-right: 6px;
    background: #e4e4e4;
    text-align: center;
    font-size: 10px;
    line-height: 16px;
}
.display-set {
    gap: 1px;
    margin-left: auto;
}
.views {
    display: grid;
    grid-template-columns: 31px 31px 31px;
    height: 100%;
    margin: 0 4px 0 14px;
}
.on {
    background: #dcdcdc;
}
.zoom {
    display: flex;
    align-items: center;
    gap: 3px;
}
.zoom input {
    appearance: none;
    width: 77px;
    height: 9px;
    background: linear-gradient(#777, #777) center / 100% 1px no-repeat;
}
.zoom input::-webkit-slider-thumb {
    appearance: none;
    width: 4px;
    height: 9px;
    background: #444;
}
.percent-value {
    margin-left: 6px;
    font-size: 11px;
}

/* callout */
.pointer {
    position: absolute;
    left: 46px;
    top: 432px;
}
.callout {
    position: absolute;
    left: 231px;
    top: 388px;
    display: flex;
    width: 568px;
    height: 105px;
    border: 3px solid red;
    background: rgba(255, 255, 255, 0.9);
    color: #262626;
    font-family: "Noto Sans CJK JP", sans-serif;
    font-weight: bold;
    font-feature-settings: normal;
}
.step {
    display: flex;
    align-items: center;
    justify-content: center;
    width: 63px;
    height: 63px;
    background: red;
}
.step span {
    width: 46px;
    height: 46px;
    border: 2px solid #fff;
    border-radius: 50%;
    color: #fff;
    font-size: 40px;
    line-height: 40px;
    text-align: center;
}
.callout p {
    margin: 0;
    padding: 0 0 0 10px;
    font-size: 38px;
    line-height: 46px;
    white-space: nowrap;
}
```
